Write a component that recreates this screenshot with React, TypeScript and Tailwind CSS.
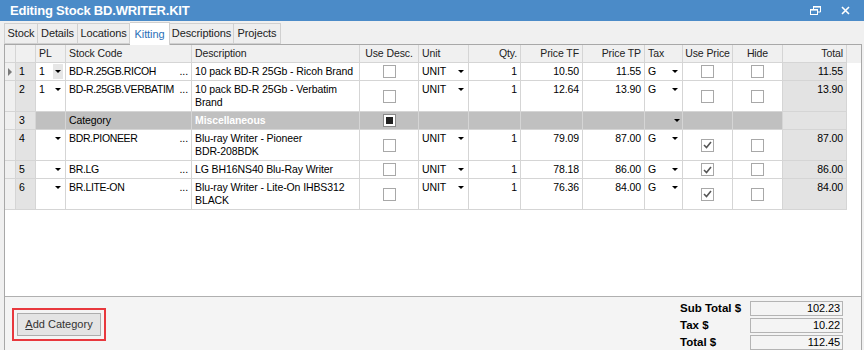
import React from 'react';

type Line = {
    n: string;
    pl: string;
    code: string;
    desc: string[];
    unit: string;
    qty: string;
    tf: string;
    tp: string;
    tax: string;
    usePrice: boolean;
    total: string;
    tall: boolean;
    current?: boolean;
};

const lines: Line[] = [
    { n: '1', pl: '1', code: 'BD-R.25GB.RICOH', desc: ['10 pack BD-R 25Gb - Ricoh Brand'], unit: 'UNIT', qty: '1', tf: '10.50', tp: '11.55', tax: 'G', usePrice: false, total: '11.55', tall: false, current: true },
    { n: '2', pl: '1', code: 'BD-R.25GB.VERBATIM', desc: ['10 pack BD-R 25Gb - Verbatim', 'Brand'], unit: 'UNIT', qty: '1', tf: '12.64', tp: '13.90', tax: 'G', usePrice: false, total: '13.90', tall: true },
    { n: '4', pl: '', code: 'BDR.PIONEER', desc: ['Blu-ray Writer - Pioneer', 'BDR-208BDK'], unit: 'UNIT', qty: '1', tf: '79.09', tp: '87.00', tax: 'G', usePrice: true, total: '87.00', tall: true },
    { n: '5', pl: '', code: 'BR.LG', desc: ['LG BH16NS40 Blu-Ray Writer'], unit: 'UNIT', qty: '1', tf: '78.18', tp: '86.00', tax: 'G', usePrice: true, total: '86.00', tall: false },
    { n: '6', pl: '', code: 'BR.LITE-ON', desc: ['Blu-ray Writer - Lite-On IHBS312', 'BLACK'], unit: 'UNIT', qty: '1', tf: '76.36', tp: '84.00', tax: 'G', usePrice: true, total: '84.00', tall: true },
];

const COLS = 'grid grid-cols-[11px_20px_30px_126px_168px_59px_50px_52px_62px_62px_38px_50px_50px_64px]';
const CELL = 'border-r border-b border-[#d5d5d5] px-[3px] pt-[2px] leading-[13px] whitespace-nowrap overflow-hidden';
const HEAD = 'border-r border-b border-[#d5d5d5] px-[3px] flex items-center whitespace-nowrap overflow-hidden';

const Arrow = () => (
    <span className="inline-block w-0 h-0 border-x-[3px] border-t-[3px] border-x-transparent border-t-black" />
);

const Check = ({ on }: { on: boolean }) => (
    <span className="w-[13px] h-[13px] border border-[#a8a8a8] bg-white flex items-center justify-center">
        {on && (
            <svg width="9" height="8" viewBox="0 0 9 8">
                <path d="M1 4 L3.5 6.5 L8 1" fill="none" stroke="#555" strokeWidth="1.6" />
            </svg>
        )}
    </span>
);

const Combo = ({ text, boxed }: { text: string; boxed?: boolean }) => (
    <div className="flex items-center justify-between h-[13px]">
        <span>{text}</span>
        <span className={`flex items-center justify-center w-[10px] h-[15px] -mr-[1px] ${boxed ? 'bg-[#e6e6e6]' : ''}`}>
            <Arrow />
        </span>
    </div>
);

function DataRow({ r }: { r: Line }) {
    const h = r.tall ? 'h-[31px]' : 'h-[18px]';
    return (
        <div className={`${COLS} ${h}`}>
            <div className="border-r border-b border-[#d5d5d5] bg-[#f0f0f0] flex justify-center pt-[5px]">
                {r.current && (
                    <span className="w-0 h-0 border-y-[4px] border-l-[4px] border-y-transparent border-l-[#7a7a7a]" />
                )}
            </div>
            <div className={`${CELL} bg-[#e3e3e3]`}>{r.n}</div>
            <div className={CELL}><Combo text={r.pl} boxed={r.current} /></div>
            <div className={`${CELL} flex justify-between`}>
                <span className="tracking-[-0.35px] min-w-0">{r.code}</span>
                <span className="shrink-0">...</span>
            </div>
            <div className={CELL}>
                {r.desc.map((d) => <div key={d}>{d}</div>)}
            </div>
            <div className="border-r border-b border-[#d5d5d5] flex items-center justify-center"><Check on={false} /></div>
            <div className={CELL}><Combo text={r.unit} /></div>
            <div className={`${CELL} text-right`}>{r.qty}</div>
            <div className={`${CELL} text-right`}>{r.tf}</div>
            <div className={`${CELL} text-right`}>{r.tp}</div>
            <div className={CELL}><Combo text={r.tax} /></div>
            <div className="border-r border-b border-[#d5d5d5] flex items-center justify-center"><Check on={r.usePrice} /></div>
            <div className="border-r border-b border-[#d5d5d5] flex items-center justify-center"><Check on={false} /></div>
            <div className={`${CELL} text-right bg-[#e3e3e3]`}>{r.total}</div>
        </div>
    );
}

function CategoryRow() {
    const grey = 'border-r border-b border-[#d5d5d5] bg-[#c0c0c0]';
    return (
        <div className={`${COLS} h-[18px]`}>
            <div className="border-r border-b border-[#d5d5d5] bg-[#f0f0f0]" />
            <div className={`${CELL} bg-[#e3e3e3]`}>3</div>
            <div className={grey} />
            <div className={`${CELL} bg-[#c0c0c0]`}>Category</div>
            <div className={`${CELL} bg-[#c0c0c0] font-bold text-white`}>Miscellaneous</div>
            <div className={`${grey} flex items-center justify-center`}>
                <span className="w-[13px] h-[13px] border border-[#8a8a8a] bg-white flex items-center justify-center">
                    <span className="w-[7px] h-[7px] bg-[#222]" />
                </span>
            </div>
            <div className={grey} />
            <div className={grey} />
            <div className={grey} />
            <div className={grey} />
            <div className={`${grey} flex justify-end items-start pt-[7px] pr-[2px]`}><Arrow /></div>
            <div className={grey} />
            <div className={grey} />
            <div className="border-r border-b border-[#d5d5d5] bg-[#e3e3e3]" />
        </div>
    );
}

const tabs: [string, string][] = [
    ['Stock', 'w-[34px]'],
    ['Details', 'w-[40px]'],
    ['Locations', 'w-[52px]'],
    ['Kitting', 'w-[40px]'],
    ['Descriptions', 'w-[64px]'],
    ['Projects', 'w-[47px]'],
];

export default function App() {
    return (
        <div className="w-[864px] h-[350px] bg-[#f0f0f0] flex flex-col overflow-hidden text-[10.5px] tracking-[-0.1px] text-black" style={{ fontFamily: '"Liberation Sans", Arial, sans-serif' }}>
            {/* title bar */}
            <div className="h-[21px] bg-[#4b8bc8] flex items-center justify-between pl-[10px] pr-[14px] shrink-0">
                <span className="text-white font-bold text-[13px] tracking-[-0.2px]">Editing Stock BD.WRITER.KIT</span>
                <div className="flex items-center gap-[20px]">
                    <svg width="11" height="9" viewBox="0 0 11 9">
                        <path d="M3.5 3 V0.5 H10.5 V6 H7.5" fill="none" stroke="white" strokeWidth="1" />
                        <rect x="3" y="0" width="8" height="1.6" fill="white" />
                        <rect x="0.5" y="3.5" width="7" height="5" fill="none" stroke="white" strokeWidth="1" />
                        <rect x="0" y="3" width="8" height="1.6" fill="white" />
                    </svg>
                    <svg width="9" height="9" viewBox="0 0 9 9">
                        <path d="M1 1 L8 8 M8 1 L1 8" stroke="white" strokeWidth="1.6" />
                    </svg>
                </div>
            </div>

            {/* tabs */}
            <div className="h-[23px] flex items-end pl-[4px] shrink-0 text-[11px]">
                {tabs.map(([t, w]) =>
                    t === 'Kitting' ? (
                        <div key={t} className={`${w} h-[23px] flex items-center justify-center bg-white border border-l-0 border-b-0 border-[#d0d0d0] text-[#2b6fb8] relative top-[1px]`}>
                            {t}
                        </div>
                    ) : (
                        <div key={t} className={`${w} h-[21px] flex items-center justify-center bg-[#eeeeee] border border-l-0 first:border-l border-[#d0d0d0] text-[#222]`}>
                            {t}
                        </div>
                    )
                )}
            </div>

            {/* panel */}
            <div className="flex-1 ml-[4px] mr-[2px] border-l border-r border-t border-[#a8a8a8] flex flex-col">
                <div className="h-[251px] bg-white shrink-0">
                    <div className={`${COLS} h-[18px] bg-[#f0f0f0] text-[#222]`}>
                        <div className={HEAD} />
                        <div className={HEAD} />
                        <div className={HEAD}>PL</div>
                        <div className={HEAD}>Stock Code</div>
                        <div className={HEAD}>Description</div>
                        <div className={`${HEAD} justify-center`}>Use Desc.</div>
                        <div className={HEAD}>Unit</div>
                        <div className={`${HEAD} justify-end`}>Qty.</div>
                        <div className={`${HEAD} justify-end`}>Price TF</div>
                        <div className={`${HEAD} justify-end`}>Price TP</div>
                        <div className={HEAD}>Tax</div>
                        <div className={`${HEAD} justify-center`}>Use Price</div>
                        <div className={`${HEAD} justify-center`}>Hide</div>
                        <div className={`${HEAD} justify-end`}>Total</div>
                    </div>
                    <DataRow r={lines[0]} />
                    <DataRow r={lines[1]} />
                    <CategoryRow />
                    {lines.slice(2).map((r) => <DataRow key={r.n} r={r} />)}
                </div>

                {/* footer */}
                <div className="flex-1 bg-[#f4f4f4] border-t border-[#b0b0b0] flex justify-between">
                    <div className="ml-[7px] mt-[11px] border-2 border-[#e8383d] p-[3px] h-[33px]">
                        <button className="h-[23px] w-[84px] bg-[#e4e4e4] border border-[#adadad] text-[11px] text-[#333] tracking-normal">
                            <span className="underline">A</span>dd Category
                        </button>
                    </div>
                    <div className="mr-[18px] mt-[4px] flex flex-col gap-[2px]">
                        {[
                            ['Sub Total $', '102.23'],
                            ['Tax $', '10.22'],
                            ['Total $', '112.45'],
                        ].map(([l, v]) => (
                            <div key={l} className="flex items-center h-[15px]">
                                <span className="w-[70px] font-bold text-[11.5px] tracking-normal">{l}</span>
                                <span className="w-[93px] h-[15px] border border-[#b4b4b4] text-right pr-[2px] leading-[13px] text-[11px]">{v}</span>
                            </div>
                        ))}
                    </div>
                </div>
            </div>
        </div>
    );
}
